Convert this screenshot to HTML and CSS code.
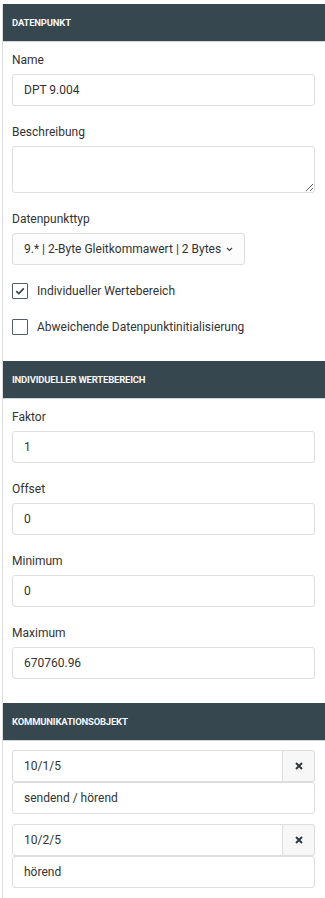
FILE: index.html
```html
<!DOCTYPE html>
<html lang="de">
<head>
    <meta charset="UTF-8">
    <meta name="viewport" content="width=device-width, initial-scale=1.0">
    <title>Datenpunkt bearbeiten</title>
    <link rel="stylesheet" href="styles.css">
</head>
<body>

    <div class="panel">
        <div class="section-head">Datenpunkt</div>
        <div class="section-body">
            <div class="field">
                <label for="dp-name">Name</label>
                <input type="text" id="dp-name" class="control" value="DPT 9.004">
            </div>

            <div class="field">
                <label for="dp-desc">Beschreibung</label>
                <textarea id="dp-desc" class="control textarea"></textarea>
            </div>

            <div class="field">
                <label for="dp-type">Datenpunkttyp</label>
                <div class="select-wrap">
                    <select id="dp-type" class="select">
                        <option>9.* | 2-Byte Gleitkommawert | 2 Bytes</option>
                    </select>
                    <svg class="chevron" width="7" height="5" viewBox="0 0 7 5"><path d="M1 1 L3.5 3.5 L6 1" fill="none" stroke="#444" stroke-width="1.2"/></svg>
                </div>
            </div>

            <label class="check">
                <span class="box checked">
                    <svg width="10" height="8" viewBox="0 0 10 8"><path d="M1.2 4.2 L3.8 6.6 L8.8 1.4" fill="none" stroke="#37474f" stroke-width="1.7"/></svg>
                </span>
                Individueller Wertebereich
            </label>

            <label class="check">
                <span class="box"></span>
                Abweichende Datenpunktinitialisierung
            </label>
        </div>

        <div class="section-head">Individueller Wertebereich</div>
        <div class="section-body">
            <div class="field">
                <label for="faktor">Faktor</label>
                <input type="text" id="faktor" class="control" value="1">
            </div>
            <div class="field">
                <label for="offset">Offset</label>
                <input type="text" id="offset" class="control" value="0">
            </div>
            <div class="field">
                <label for="minimum">Minimum</label>
                <input type="text" id="minimum" class="control" value="0">
            </div>
            <div class="field">
                <label for="maximum">Maximum</label>
                <input type="text" id="maximum" class="control" value="670760.96">
            </div>
        </div>

        <div class="section-head">Kommunikationsobjekt</div>
        <div class="section-body">
            <div class="ko">
                <div class="input-group">
                    <input type="text" class="control" value="10/1/5">
                    <button class="remove"><svg width="8" height="8" viewBox="0 0 8 8"><path d="M1 1 L7 7 M7 1 L1 7" stroke="#2f3b42" stroke-width="2"/></svg></button>
                </div>
                <div class="control flag">sendend / hörend</div>
            </div>
            <div class="ko">
                <div class="input-group">
                    <input type="text" class="control" value="10/2/5">
                    <button class="remove"><svg width="8" height="8" viewBox="0 0 8 8"><path d="M1 1 L7 7 M7 1 L1 7" stroke="#2f3b42" stroke-width="2"/></svg></button>
                </div>
                <div class="control flag">hörend</div>
            </div>
        </div>
    </div>

</body>
</html>
```

FILE: styles.css
```css
body {
    font-family: 'Roboto', 'Liberation Sans', sans-serif;
    background-color: #fff;
    color: #333;
    margin: 0;
    padding: 4px 0 0 2px;
}

.panel {
    border-left: 1px solid #ddd;
    min-height: 894px;
}

.section-head {
    background-color: #37474f;
    color: #f2f6f8;
    font-size: 9.5px;
    font-weight: 700;
    text-transform: uppercase;
    letter-spacing: -0.2px;
    height: 37px;
    line-height: 37px;
    padding-left: 9px;
    border-bottom: 1px solid #cfd6da;
}

.section-body {
    padding: 9px 10px 7px 9px;
}

.field {
    margin-bottom: 17px;
}

.field label {
    display: block;
    font-size: 12px;
    line-height: 18px;
    margin-bottom: 5px;
    color: #333;
}

.control {
    display: block;
    box-sizing: border-box;
    width: 100%;
    height: 32px;
    padding: 0 11px;
    border: 1px solid #ddd;
    border-radius: 3px;
    font-family: inherit;
    font-size: 12px;
    color: #333;
    background-color: #fff;
    outline: none;
}

.textarea {
    height: 47px;
    padding: 6px 11px;
    resize: vertical;
}

.select-wrap {
    position: relative;
    display: inline-block;
}

.select {
    appearance: none;
    -webkit-appearance: none;
    height: 32px;
    padding: 0 22px 0 11px;
    border: 1px solid #ddd;
    border-radius: 3px;
    background-color: #fcfcfc;
    font-family: inherit;
    font-size: 12px;
    color: #333;
    outline: none;
}

.chevron {
    position: absolute;
    right: 12px;
    top: 14px;
}

.check {
    display: flex;
    align-items: center;
    gap: 9px;
    font-size: 12px;
    line-height: 18px;
    color: #333;
    margin-bottom: 18px;
}

.box {
    box-sizing: border-box;
    width: 16px;
    height: 16px;
    border: 1px solid #4f5f67;
    border-radius: 1px;
    display: flex;
    align-items: center;
    justify-content: center;
    background-color: #fff;
}

.ko {
    margin-bottom: 10px;
}

.input-group {
    display: flex;
}

.input-group .control {
    flex: 1;
    border-radius: 3px 0 0 3px;
}

.remove {
    width: 32px;
    height: 32px;
    flex: none;
    display: flex;
    align-items: center;
    justify-content: center;
    border: 1px solid #ddd;
    border-left: none;
    border-radius: 0 3px 3px 0;
    background-color: #f7f7f7;
    padding: 0;
    cursor: pointer;
}

.flag {
    display: flex;
    align-items: center;
}
```
